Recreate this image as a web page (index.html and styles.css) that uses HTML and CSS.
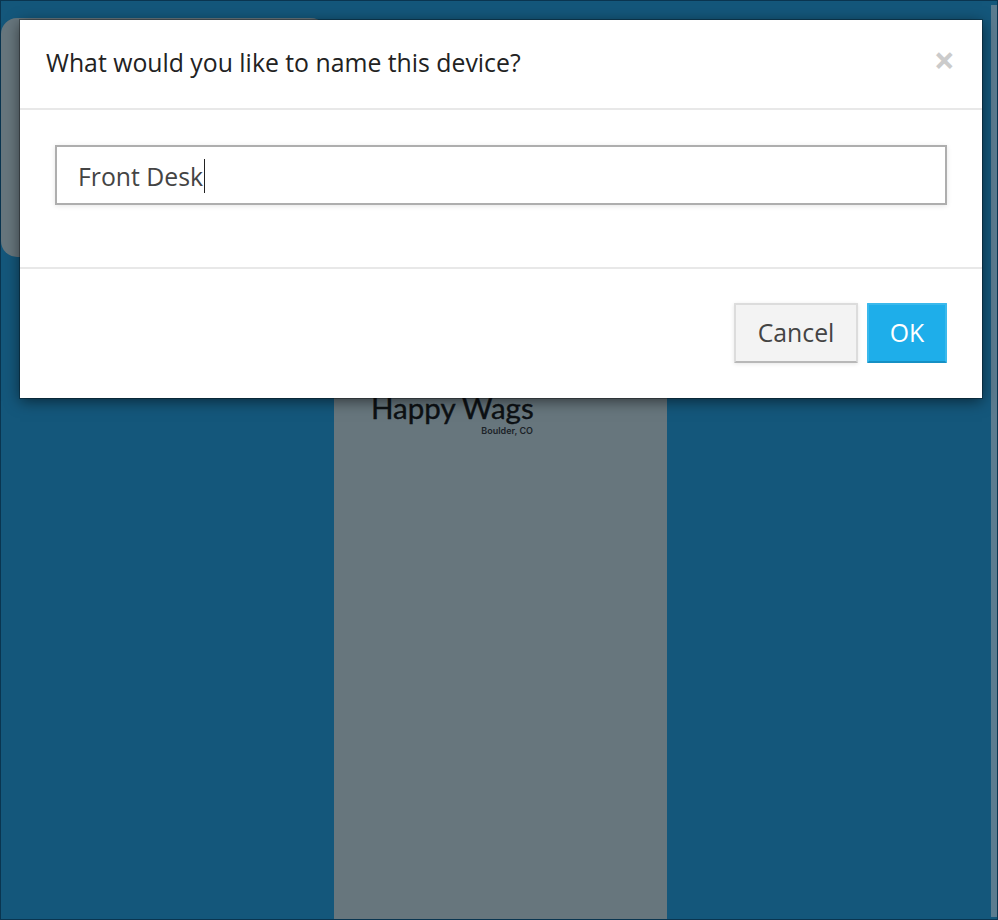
FILE: index.html
```html
<!DOCTYPE html>
<html lang="en">
<head>
    <meta charset="UTF-8">
    <meta name="viewport" content="width=device-width, initial-scale=1.0">
    <title>Name this device</title>
    <link rel="stylesheet" href="styles.css">
</head>
<body>
    <div class="page">
        <div class="left-col">
            <div class="side-card"></div>
        </div>
        <div class="preview">
            <div class="brand">
                <div class="brand-name">Happy Wags</div>
                <div class="brand-place">Boulder, CO</div>
            </div>
        </div>
        <div class="right-col">
            <div class="scrollbar"></div>
        </div>
    </div>

    <div class="modal">
        <div class="modal-header">
            <h2>What would you like to name this device?</h2>
            <span class="close">&times;</span>
        </div>
        <div class="modal-body">
            <div class="text-input">Front Desk<span class="caret"></span></div>
        </div>
        <div class="modal-footer">
            <button type="button" class="btn btn-cancel">Cancel</button>
            <button type="button" class="btn btn-ok">OK</button>
        </div>
    </div>
</body>
</html>
```

FILE: styles.css
```css
html, body {
    margin: 0;
    padding: 0;
    height: 100%;
}
body {
    font-family: "Open Sans", "Noto Sans", sans-serif;
    background-color: #14577b;
    overflow: hidden;
}
.page {
    box-sizing: border-box;
    height: 920px;
    display: grid;
    grid-template-columns: 333px 333px 1fr;
    border: 1px solid #0a3550;
}
.left-col {
    padding-top: 17px;
}
.side-card {
    width: 326px;
    height: 239px;
    background: #67767d;
    border-radius: 16px;
}
.preview {
    background: #67767d;
    margin-top: 30px;
    padding-top: 361px;
}
.brand {
    width: 162px;
    margin-left: 37px;
    color: #0d1114;
}
.brand-name {
    font-family: "Lato", sans-serif;
    font-size: 29.5px;
    line-height: 32px;
    text-align: right;
    white-space: nowrap;
    -webkit-text-stroke: 0.4px #0d1114;
}
.brand-place {
    font-family: "Inter", sans-serif;
    font-size: 9px;
    font-weight: 600;
    line-height: 10px;
    margin-top: 2px;
    text-align: right;
    white-space: nowrap;
    color: #1c2328;
}
.right-col {
    display: flex;
    justify-content: flex-end;
    padding: 4px 0 2px 0;
}
.scrollbar {
    width: 6px;
    background: #5b7c90;
}

/* dialog on top of the page */
.modal {
    position: absolute;
    top: 20px;
    left: 20px;
    width: 962px;
    height: 378px;
    background: white;
    box-shadow: 0 0 0 1px rgba(0, 0, 0, 0.3), 0 3px 14px rgba(0, 0, 0, 0.55);
    display: flex;
    flex-direction: column;
}
.modal-header {
    box-sizing: border-box;
    height: 90px;
    padding: 0 27px 4px 26px;
    display: flex;
    justify-content: space-between;
    align-items: center;
    border-bottom: 2px solid #e8e8e8;
}
.modal-header h2 {
    margin: 0;
    font-size: 24.8px;
    font-weight: 400;
    color: #222;
}
.close {
    font-size: 37px;
    font-weight: 700;
    line-height: 1;
    color: #cbcbcb;
    margin-top: -5px;
}
.modal-body {
    box-sizing: border-box;
    height: 159px;
    padding: 35px 35px 0;
    border-bottom: 2px solid #e8e8e8;
}
.text-input {
    box-sizing: border-box;
    height: 60px;
    padding: 1px 21px 0;
    display: flex;
    align-items: center;
    font-size: 24.8px;
    color: #444;
    border: 2px solid #aeaeae;
    box-shadow: 0 1px 5px rgba(0, 0, 0, 0.1);
}
.caret {
    width: 1px;
    height: 34px;
    margin-left: 1px;
    background: #222;
}
.modal-footer {
    flex: 1;
    padding-top: 34px;
    padding-right: 35px;
    display: flex;
    justify-content: flex-end;
    align-items: flex-start;
    gap: 9px;
}
.btn {
    box-sizing: border-box;
    height: 60px;
    padding: 0 0 3px;
    font-family: inherit;
    font-size: 24.8px;
    border-radius: 1px;
}
.btn-cancel {
    width: 124px;
    color: #444;
    background-color: #f3f3f3;
    border: 2px solid #dcdcdc;
    border-bottom-color: #b8b8b8;
    box-shadow: 0 1px 4px rgba(0, 0, 0, 0.1);
}
.btn-ok {
    width: 80px;
    color: white;
    background-color: #1eaeea;
    border: 2px solid #3bb9ec;
    border-bottom-color: #1690c4;
}
```
